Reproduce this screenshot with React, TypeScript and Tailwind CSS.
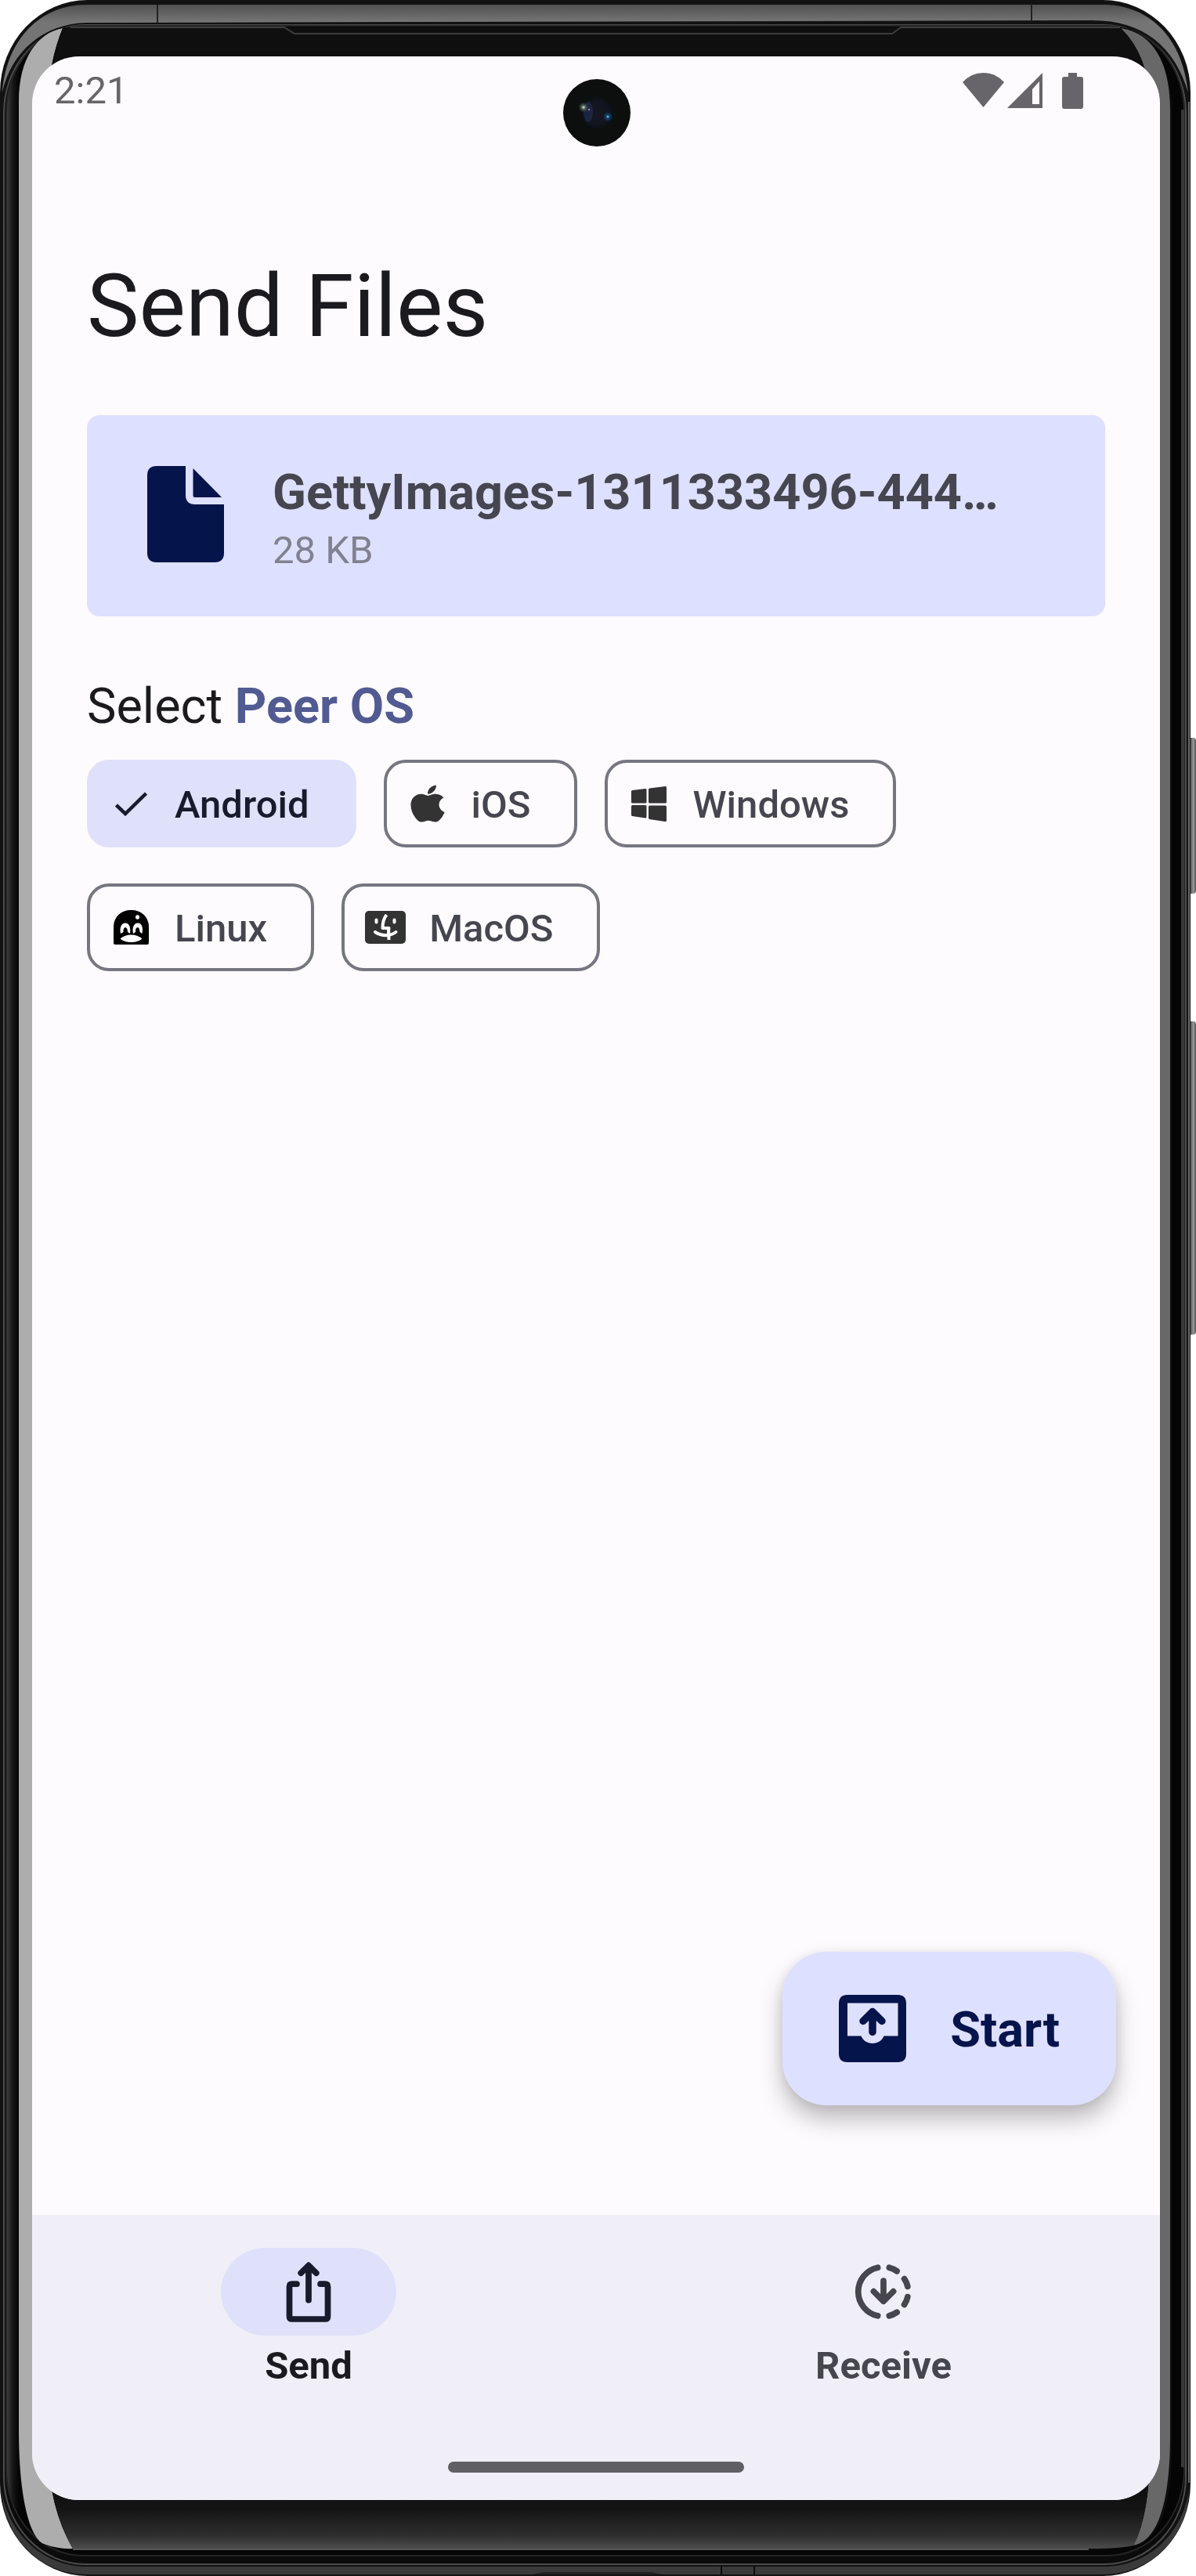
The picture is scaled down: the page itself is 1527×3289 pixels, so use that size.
import { useState } from "react";
import type { ReactNode } from "react";
import { FaApple } from "react-icons/fa";

function PhoneBody() {
  return (
    <svg
      className="absolute inset-0 -z-10 h-full w-full"
      viewBox="0 0 1527 3289"
      preserveAspectRatio="none"
      aria-hidden="true"
    >
      <defs>
        <linearGradient id="topRail" x1="0" y1="0" x2="0" y2="28" gradientUnits="userSpaceOnUse">
          <stop offset="0.15" stopColor="#4e4e4e" />
          <stop offset="1" stopColor="#757575" />
        </linearGradient>
        <linearGradient id="chin" x1="0" y1="0" x2="0" y2="1">
          <stop offset="0" stopColor="#0e0e0e" />
          <stop offset="0.4" stopColor="#141414" />
          <stop offset="0.8" stopColor="#2e2e2e" />
          <stop offset="1" stopColor="#4c4c4c" />
        </linearGradient>
        <linearGradient id="leftBezel" x1="9" y1="0" x2="24" y2="0" gradientUnits="userSpaceOnUse">
          <stop offset="0" stopColor="#3c3c3c" />
          <stop offset="0.5" stopColor="#161616" />
          <stop offset="1" stopColor="#050505" />
        </linearGradient>
        <linearGradient id="key" x1="0" y1="0" x2="1" y2="0">
          <stop offset="0" stopColor="#222" />
          <stop offset="0.5" stopColor="#333" />
          <stop offset="0.8" stopColor="#999" />
          <stop offset="1" stopColor="#555" />
        </linearGradient>
      </defs>
      <rect x="1510" y="942" width="17" height="199" rx="4" fill="url(#key)" />
      <rect x="1510" y="1304" width="17" height="400" rx="4" fill="url(#key)" />
      <rect x="0" y="0" width="1520" height="3289" rx="112" ry="118" fill="#121212" />
      <path d="M3 118C8 50 52 6 110 6H1412C1470 8 1510 50 1517 118C1500 60 1460 26 1395 26L110 29C56 30 14 66 3 118Z" fill="url(#topRail)" />
      <path d="M201 6V29M1317 5V26" stroke="#222" strokeWidth="2" />
      <path d="M2 3180C12 3240 60 3277 110 3277H1410C1462 3277 1508 3240 1518 3180C1516 3240 1470 3287 1408 3287H112C50 3287 6 3240 2 3180Z" fill="#3a3a3a" />
      <path d="M921 3257V3287M963 3257V3287" stroke="#0c0c0c" strokeWidth="2" />
      <path d="M680 3287L694 3284H832L846 3287Z" fill="#222" />
      <path d="M1518 130V3170" stroke="#6a6a6a" strokeWidth="2" />
      <rect x="5" y="32" width="1509" height="3242" rx="104" ry="112" fill="#0b0b0b" stroke="#4c4c4c" strokeWidth="2" />
      <rect x="8" y="33" width="1504" height="3230" rx="98" ry="110" fill="url(#leftBezel)" stroke="#242424" strokeWidth="2" />
      <path d="M1510 140V3150" stroke="#383838" strokeWidth="4" />
      <path d="M24 125C24 76 48 36 84 35H1431C1474 38 1496 90 1496 140V3130C1496 3200 1480 3246 1446 3251Q1420 3256 1390 3256H120Q60 3256 45 3232Q24 3190 24 3130Z" fill="#0e0e0e" />
      <path d="M80 36C48 42 24 74 24 130V3100C24 3190 38 3240 56 3248Q74 3255 93 3254Q62 3200 62 3130V130Q62 80 80 36Z" fill="#adadad" />
      <path d="M1431 36C1472 42 1494 80 1494 140V3110C1494 3190 1480 3244 1447 3250Q1468 3210 1468 3130V130Q1466 70 1431 36Z" fill="#686868" />
      <path d="M62 3110V3130Q62 3200 93 3254H1390Q1430 3254 1447 3250Q1468 3210 1468 3130V3110Z" fill="#0e0e0e" />
      <path d="M66 3170Q72 3218 93 3254H1390Q1430 3254 1447 3250Q1462 3222 1466 3170Z" fill="url(#chin)" />
      <path d="M62 140V130Q62 80 80 36H1431Q1466 70 1467 130V140Z" fill="#0f0f0f" />
      <path d="M90 35H363L376 43H1139L1150 35H1430" fill="none" stroke="#3d3d3d" strokeWidth="2" />
      <path d="M93 3255H1390" stroke="#565656" strokeWidth="2" />
    </svg>
  );
}

function Camera() {
  return (
    <svg className="absolute top-[101px] left-1/2 -ml-[45px] h-[86px] w-[86px]" viewBox="0 0 86 86" aria-hidden="true">
      <defs>
        <radialGradient id="lens" cx="0.5" cy="0.5" r="0.5">
          <stop offset="0" stopColor="#191522" />
          <stop offset="0.7" stopColor="#101521" />
          <stop offset="1" stopColor="#0c0f10" />
        </radialGradient>
        <radialGradient id="glareWarm">
          <stop offset="0" stopColor="#e8eee6" />
          <stop offset="0.3" stopColor="#66756a" />
          <stop offset="1" stopColor="#24302a" stopOpacity="0" />
        </radialGradient>
        <radialGradient id="glareBlue">
          <stop offset="0" stopColor="#bfe6ff" />
          <stop offset="0.25" stopColor="#14507c" />
          <stop offset="1" stopColor="#0b2a48" stopOpacity="0" />
        </radialGradient>
      </defs>
      <circle cx="43" cy="43" r="43" fill="#0d0e0e" />
      <circle cx="43" cy="43" r="21" fill="url(#lens)" />
      <ellipse cx="32" cy="42" rx="6" ry="13" fill="#27396b" opacity="0.45" />
      <circle cx="26" cy="36" r="7" fill="url(#glareWarm)" />
      <circle cx="33" cy="39" r="1.2" fill="#a583b4" />
      <circle cx="57" cy="48" r="7" fill="url(#glareBlue)" />
    </svg>
  );
}

function StatusIcons() {
  return (
    <svg className="h-[46px] w-[154px]" viewBox="0 0 154 46" fill="#67656a" aria-hidden="true">
      <path d="M0 12Q11 0 26.500 0T53 12L26.500 44Z" />
      <path fillRule="evenodd" d="M102 0V45H57ZM98 11L89 21V40H98Z" />
      <path d="M135 0H146V5H151Q154 5 154 8V43Q154 46 151 46H130Q127 46 127 43V8Q127 5 130 5H135Z" />
    </svg>
  );
}

function FileIcon() {
  return (
    <svg className="mt-1.5 h-[123px] w-[98px] shrink-0" viewBox="0 0 98 123" fill="#05144b" aria-hidden="true">
      <path d="M12 0H49V37Q49 49 61 49H98V111Q98 123 86 123H12Q0 123 0 111V12Q0 0 12 0Z" />
      <path d="M58.500 3L95 40H61Q58.500 40 58.500 37.500Z" />
    </svg>
  );
}

function CheckIcon() {
  return (
    <svg className="h-[31px] w-[41px]" viewBox="0 0 41 31" fill="none" stroke="currentColor" strokeWidth="4.500" aria-hidden="true">
      <path d="M1.500 17L13 28L39.500 2" />
    </svg>
  );
}

function WindowsIcon() {
  return (
    <svg className="h-[45px] w-[45px]" viewBox="0 0 45 45" fill="#333" stroke="#333" strokeWidth="3" strokeLinejoin="round" aria-hidden="true">
      <path d="M1.500 6.500L18 4.500V20H1.500ZM23.500 4L43.500 1.500V20H23.500ZM1.500 25.500H18V39L1.500 36.500ZM23.500 26H43.500V43.500L23.500 40.500Z" />
    </svg>
  );
}

function LinuxIcon() {
  return (
    <svg className="h-[44px] w-[45px]" viewBox="0 0 45 44" aria-hidden="true">
      <path d="M0 42V22C0 8 10 0 22.500 0S45 8 45 22V42Q45 44 43 44H2Q0 44 0 42Z" fill="#000" />
      <ellipse cx="30.500" cy="9" rx="2.500" ry="2.800" fill="#fff" />
      <path d="M9 30C7.500 22 10 16.500 15 16.500S22 22 21 30L18 28C18 20 12 20 12.500 28ZM25 30C23.500 22 26 16.500 31 16.500S38 22 36.500 30L33.500 28C33.500 20 27.500 20 28 28Z" fill="#fff" />
      <path d="M8.500 36.500C13 33 17 31.500 22.500 31.500S32 33 36.500 36.500C32 40 28 41 22.500 41S13 40 8.500 36.500Z" fill="#fff" />
    </svg>
  );
}

function MacIcon() {
  return (
    <svg className="h-[42px] w-[52px]" viewBox="0 0 52 42" fill="none" stroke="#fff" strokeWidth="4" strokeLinecap="round" aria-hidden="true">
      <rect width="52" height="42" rx="5" fill="#333" stroke="none" />
      <path d="M14.500 11.500V14.500M37.500 11.500V14.500M13 27C21 32.500 32 32.500 39.500 27" />
      <path d="M27.500 5C23.500 10 22.500 15 22.500 22H30.500C29.500 27 30.500 32 30.500 37" strokeLinecap="butt" strokeLinejoin="round" />
    </svg>
  );
}

function OutboxIcon() {
  return (
    <svg className="h-[86px] w-[86px]" viewBox="0 0 86 86" aria-hidden="true">
      <path
        fill="currentColor"
        fillRule="evenodd"
        d="M11 0H75Q86 0 86 11V75Q86 86 75 86H11Q0 86 0 75V11Q0 0 11 0ZM11 10.500V52.500H28.500C31 58.500 36.500 62 43 62S55 58.500 57.500 52.500H75.500V10.500Z"
      />
      <path d="M31 33.500L43 21.500L55 33.500M43 23V47.500" fill="none" stroke="currentColor" strokeWidth="9.500" strokeLinecap="round" strokeLinejoin="round" />
    </svg>
  );
}

function ShareIcon() {
  return (
    <svg className="h-[84px] w-[84px]" viewBox="0 0 24 24" fill="none" stroke="currentColor" strokeWidth="2.200" strokeLinecap="round" strokeLinejoin="round" aria-hidden="true">
      <path d="M7.700 9.200H6Q5 9.200 5 10.200V21Q5 22 6 22H18Q19 22 19 21V10.200Q19 9.200 18 9.200H16.300" />
      <path d="M12 15.100V2.500M9.200 5.200L12 2.400L14.800 5.200" />
    </svg>
  );
}

function DownloadingIcon() {
  return (
    <svg className="h-[84px] w-[84px]" viewBox="0 0 24 24" fill="none" stroke="currentColor" strokeWidth="2.200" strokeLinecap="round" strokeLinejoin="round" aria-hidden="true">
      <path d="M9.900 3.200A9 9 0 0 0 9.900 20.800" />
      <path d="M14.100 3.200Q15.600 3.600 16.900 4.500M19.600 7.300Q20.500 8.600 20.800 10.100M20.800 13.900Q20.500 15.400 19.600 16.700M16.900 19.500Q15.600 20.400 14.100 20.800" />
      <path d="M12 8V15M8.400 11.900L12 15.500L15.600 11.900" />
    </svg>
  );
}

const systems: { name: string; icon: ReactNode }[] = [
  { name: "Android", icon: <CheckIcon /> },
  { name: "iOS", icon: <FaApple className="h-[54px] w-[44px] text-[#333]" preserveAspectRatio="none" aria-hidden="true" /> },
  { name: "Windows", icon: <WindowsIcon /> },
  { name: "Linux", icon: <LinuxIcon /> },
  { name: "MacOS", icon: <MacIcon /> },
];

function Chip({ name, icon, selected, onSelect }: { name: string; icon: ReactNode; selected: boolean; onSelect: () => void }) {
  const tone = selected ? "border-[#dfe1fa] bg-[#dfe1fa] text-[#181b2c]" : "border-[#767680] text-[#45464f]";
  return (
    <button
      type="button"
      aria-pressed={selected}
      onClick={onSelect}
      className={`flex h-28 items-center gap-7 rounded-[28px] border-4 pr-14 pl-6 text-[49px] font-medium ${tone}`}
    >
      <span className="flex w-14 justify-center">{icon}</span>
      <span className="pt-1">{name}</span>
    </button>
  );
}

export default function App() {
  const [os, setOs] = useState("Android");
  return (
    <div className="relative isolate flex min-h-screen flex-col bg-white pt-[72px] pr-[46px] pb-[97px] pl-[41px] font-['Roboto',sans-serif]">
      <PhoneBody />
      <div className="flex flex-1 flex-col overflow-hidden rounded-[60px] bg-[#fefbff] text-[#1b1b1f]">
        <header className="flex items-center justify-between pt-4 pr-[98px] pl-7 text-[#67656a]">
          <time className="text-[49px] leading-[56px]">2:21</time>
          <StatusIcons />
        </header>

        <main className="flex flex-1 flex-col pt-[177px]">
          <div className="flex flex-col px-[70px]">
            <h1 className="text-[112px] leading-[140px]">Send Files</h1>

            <section className="mt-[69px] flex items-start gap-[62px] rounded-2xl bg-[#dee0ff] pt-[59px] pr-[70px] pb-[50px] pl-[77px]">
              <FileIcon />
              <div className="min-w-0">
                <p className="truncate text-[63px] leading-[80px] font-bold text-[#45464f]">GettyImages-1311333496-444…</p>
                <p className="text-[49px] leading-[68px] text-[#81828f]">28 KB</p>
              </div>
            </section>

            <h2 className="mt-[73px] text-[63px] leading-[84px]">
              Select <span className="font-bold text-[#515b92]">Peer OS</span>
            </h2>
            <div className="mt-[26px] flex flex-wrap gap-x-[35px] gap-y-[46px]">
              {systems.map((s) => (
                <Chip key={s.name} name={s.name} icon={s.icon} selected={os === s.name} onSelect={() => setOs(s.name)} />
              ))}
            </div>
          </div>

          <button
            type="button"
            className="mt-auto mr-14 mb-[140px] flex h-[196px] items-center gap-14 self-end rounded-[56px] bg-[#dee0ff] px-[72px] text-[63px] font-bold text-[#05144b] shadow-[0_18px_30px_rgba(0,0,0,0.25),0_2px_14px_rgba(0,0,0,0.08)]"
          >
            <OutboxIcon />
            <span className="pt-1">Start</span>
          </button>
        </main>

        <footer className="flex flex-col items-center bg-[#f0eff7] pt-[42px] pb-[35px]">
          <nav className="grid w-full grid-cols-2 gap-7">
            <a href="#send" aria-current="page" className="flex flex-col items-center gap-1 text-[49px] leading-[70px] font-bold">
              <span className="flex h-28 w-56 items-center justify-center rounded-full bg-[#dfe1fa] text-[#181b2c]">
                <ShareIcon />
              </span>
              Send
            </a>
            <a href="#receive" className="flex flex-col items-center gap-1 text-[49px] leading-[70px] font-bold text-[#45464f]">
              <span className="flex h-28 w-56 items-center justify-center rounded-full">
                <DownloadingIcon />
              </span>
              Receive
            </a>
          </nav>
          <div className="mt-[87px] h-3.5 w-[378px] rounded-full bg-[#605f63]" />
        </footer>
      </div>
      <Camera />
    </div>
  );
}
